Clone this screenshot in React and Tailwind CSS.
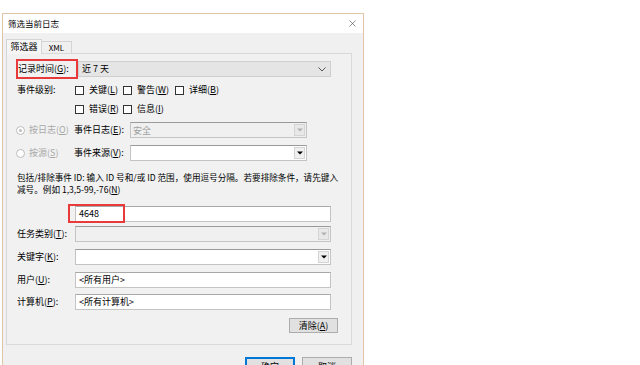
import { X } from "lucide-react";

const font = { fontFamily: '"Noto Sans CJK SC", "Noto Sans", sans-serif' };

// label text with its access key underlined, e.g. 关键(L)
function Mn({ text, k, tail = "" }) {
  return (
    <span>
      {text}(<u>{k}</u>){tail}
    </span>
  );
}

function Check({ text, k, w }) {
  return (
    <div className={`flex items-center gap-[5px] ${w}`}>
      <span className="w-[9px] h-[9px] border border-[#333] bg-white shrink-0" />
      <Mn text={text} k={k} />
    </div>
  );
}

function Radio({ text, k, checked }) {
  return (
    <div className="flex items-center gap-[4px] w-[58px] text-[#a8a8a8]">
      <span className="w-[9px] h-[9px] rounded-full border border-[#bcbcbc] bg-white flex items-center justify-center shrink-0">
        {checked && <span className="w-[3px] h-[3px] rounded-full bg-[#bcbcbc]" />}
      </span>
      <Mn text={text} k={k} />
    </div>
  );
}

function Combo({ value, disabled, className = "" }) {
  return (
    <div
      className={`h-[16px] flex items-center border border-[#c4c4c4] border-t-[#9a9a9a] ${
        disabled ? "bg-[#f0f0f0] text-[#a0a0a0]" : "bg-white"
      } ${className}`}
    >
      <span className="flex-1 pl-[2px] leading-none">{value}</span>
      <span
        className={`w-[11px] h-[12px] mr-[1px] flex items-center justify-center border border-[#d4d4d4] ${
          disabled ? "bg-[#e8e8e8]" : "bg-[#f0f0f0]"
        }`}
      >
        <svg width="6" height="4" viewBox="0 0 6 4">
          <path d="M0 0.5h6L3 3.5z" fill={disabled ? "#b0b0b0" : "#000"} />
        </svg>
      </span>
    </div>
  );
}

function TextBox({ value, className = "" }) {
  return (
    <div
      className={`h-[16px] flex items-center bg-white border border-[#c4c4c4] border-t-[#a8a8a8] pl-[3px] ${className}`}
    >
      {value}
    </div>
  );
}

function Row({ label, children, className = "" }) {
  return (
    <div className={`flex items-center ${className}`}>
      <span className="w-[59px] pl-[1px] shrink-0">{label}</span>
      {children}
    </div>
  );
}

export default function App() {
  return (
    <div className="w-[640px] h-[365px] overflow-hidden bg-white text-[9px] text-black" style={font}>
      <div className="ml-[2px] mt-[13px] w-[362px] border border-[#e2c4a6] bg-[#f0f0f0]">
        {/* title bar */}
        <div className="h-[19px] bg-white flex items-center justify-between pl-[5px] pr-[5px]">
          <span className="text-[8.5px]">筛选当前日志</span>
          <X size={11} strokeWidth={1.2} className="text-[#333]" />
        </div>

        <div className="pl-[3px] pr-[11px] pt-[5px]">
          {/* tabs */}
          <div className="flex items-end h-[15px]">
            <div className="h-[15px] w-[36px] flex items-center justify-center bg-[#f6f6f6] border border-b-0 border-[#d4d4d4] relative top-[1px]">
              筛选器
            </div>
            <div className="h-[12px] w-[30px] flex items-center justify-center bg-[#f0f0f0] border border-b-0 border-l-0 border-[#d4d4d4] text-[8px]">
              XML
            </div>
          </div>

          {/* panel */}
          <div className="border border-[#d9d9d9] bg-[#f1f1f1] pl-[9px] pr-[20px] pt-[5px] pb-[11px]">
            <div className="relative flex items-center h-[20px]">
              <span className="w-[62px] pl-[2px] shrink-0">
                <Mn text="记录时间" k="G" tail=":" />
              </span>
              <div className="flex-1 h-[16px] flex items-center bg-[#e5e5e5] border border-[#cfcfcf] pl-[3px]">
                <span className="flex-1">近 7 天</span>
                <svg width="8" height="5" viewBox="0 0 8 5" className="mr-[4px]">
                  <path d="M0.5 0.5L4 4L7.5 0.5" stroke="#555" fill="none" strokeWidth="1" />
                </svg>
              </div>
              <span className="absolute left-0 top-0 w-[62px] h-[20px] border-2 border-[#e83a3a]" />
            </div>

            <Row label="事件级别:" className="h-[14px] mt-[4px]">
              <Check text="关键" k="L" w="w-[48px]" />
              <Check text="警告" k="W" w="w-[52px]" />
              <Check text="详细" k="B" w="w-[60px]" />
            </Row>
            <Row label="" className="h-[14px] mt-[5px]">
              <Check text="错误" k="R" w="w-[48px]" />
              <Check text="信息" k="I" w="w-[52px]" />
            </Row>

            <div className="flex items-center mt-[6px] h-[16px]">
              <Radio text="按日志" k="O" checked />
              <span className="w-[56px] shrink-0">
                <Mn text="事件日志" k="E" tail=":" />
              </span>
              <Combo value="安全" disabled className="w-[177px]" />
            </div>
            <div className="flex items-center mt-[7px] h-[16px]">
              <Radio text="按源" k="S" />
              <span className="w-[56px] shrink-0">
                <Mn text="事件来源" k="V" tail=":" />
              </span>
              <Combo value="" className="w-[177px]" />
            </div>

            <p className="mt-[10px] leading-[12px] pl-[1px] whitespace-nowrap text-[8.6px]">
              包括/排除事件 ID: 输入 ID 号和/或 ID 范围，使用逗号分隔。若要排除条件，请先键入
              <br />
              减号。例如 1,3,5-99,-76(<u>N</u>)
            </p>

            <div className="relative flex items-center mt-[9px] h-[19px]">
              <span className="w-[59px] shrink-0" />
              <TextBox value="4648" className="flex-1" />
              <span className="absolute left-[52px] top-0 w-[57px] h-[19px] border-2 border-[#e83a3a]" />
            </div>

            <Row label={<Mn text="任务类别" k="T" tail=":" />} className="mt-[3px] h-[16px]">
              <Combo value="" disabled className="flex-1" />
            </Row>
            <Row label={<Mn text="关键字" k="K" tail=":" />} className="mt-[7px] h-[16px]">
              <Combo value="" className="flex-1" />
            </Row>
            <Row label={<Mn text="用户" k="U" tail=":" />} className="mt-[7px] h-[16px]">
              <TextBox value="<所有用户>" className="flex-1" />
            </Row>
            <Row label={<Mn text="计算机" k="P" tail=":" />} className="mt-[6px] h-[16px]">
              <TextBox value="<所有计算机>" className="flex-1" />
            </Row>

            <div className="flex justify-end mt-[8px] -mr-[7px]">
              <div className="w-[49px] h-[15px] flex items-center justify-center bg-[#e1e1e1] border border-[#adadad]">
                <Mn text="清除" k="A" />
              </div>
            </div>
          </div>

          {/* footer buttons */}
          <div className="flex justify-end gap-[7px] mt-[12px]">
            <div className="w-[50px] h-[20px] flex items-center justify-center bg-[#e1e1e1] border-2 border-[#0078d7]">
              确定
            </div>
            <div className="w-[50px] h-[20px] flex items-center justify-center bg-[#e1e1e1] border border-[#adadad]">
              取消
            </div>
          </div>
        </div>
      </div>
    </div>
  );
}
